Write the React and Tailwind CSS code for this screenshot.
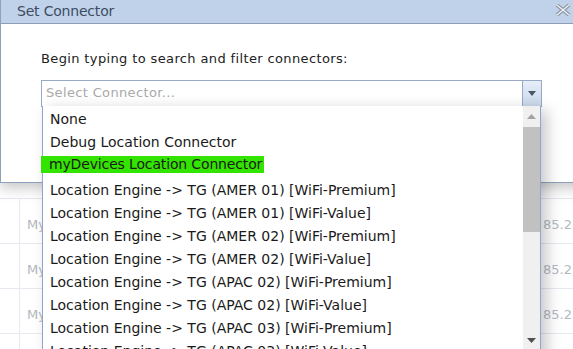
import React from "react";

const items = [
  "None",
  "Debug Location Connector",
  "myDevices Location Connector",
  "Location Engine -> TG (AMER 01) [WiFi-Premium]",
  "Location Engine -> TG (AMER 01) [WiFi-Value]",
  "Location Engine -> TG (AMER 02) [WiFi-Premium]",
  "Location Engine -> TG (AMER 02) [WiFi-Value]",
  "Location Engine -> TG (APAC 02) [WiFi-Premium]",
  "Location Engine -> TG (APAC 02) [WiFi-Value]",
  "Location Engine -> TG (APAC 03) [WiFi-Premium]",
  "Location Engine -> TG (APAC 03) [WiFi-Value]",
];

const font = { fontFamily: '"DejaVu Sans", Verdana, sans-serif' };

export default function App() {
  return (
    <div className="relative w-[573px] h-[349px] overflow-hidden bg-white" style={font}>
      {/* background grid */}
      <div className="flex flex-col pt-[198px]">
        {[0, 1, 2, 3].map((i) => (
          <div key={i} className="flex h-[45px] border-t border-[#e6eaf0]">
            <div className="w-[20px] border-r border-[#e6eaf0]" />
            <div className="flex-1 pl-[7px] pt-[16px] text-[13px] text-[#b4b8c0]">{i < 3 ? "My" : ""}</div>
            <div className="w-[30px] pt-[16px] text-[13px] text-[#b4b8c0]">{i < 3 ? "85.2" : ""}</div>
          </div>
        ))}
      </div>

      {/* dialog */}
      <div className="absolute left-0 top-0 w-[620px] h-[183px] flex flex-col bg-white border-l border-b border-[#8ea1bd] shadow-[0_4px_14px_rgba(0,0,0,0.25)]">
        <div className="h-[24px] flex items-center justify-between bg-[#bfd2ea] border-b border-[#8d9db5] pl-[16px] pr-[49px]">
          <span className="text-[14px] text-[#3e4c63] tracking-[-0.2px]">Set Connector</span>
          <svg width="16" height="12" viewBox="0 0 16 12" className="mb-[4px]">
            <path d="M2 1 L14 11 M14 1 L2 11" stroke="#8c96a4" strokeWidth="3.6" />
            <path d="M2 1 L14 11 M14 1 L2 11" stroke="#eef2f7" strokeWidth="1.4" />
          </svg>
        </div>
        <div className="pl-[40px] pt-[25px] text-[13px] text-[#222] tracking-[0.37px]">Begin typing to search and filter connectors:</div>
        <div className="ml-[40px] mt-[11px] w-[501px] h-[27px] flex border border-[#97a9c7] bg-white">
          <div className="flex-1 pl-[4px] flex items-center text-[13px] text-[#a9a9a9] tracking-[0.35px]">Select Connector...</div>
          <div className="w-[19px] border-l border-[#97a9c7] bg-gradient-to-b from-[#e6eef8] to-[#c9d8ec] flex items-center justify-center">
            <svg width="8" height="5" viewBox="0 0 8 5"><path d="M0 0 H8 L4 5 Z" fill="#4a5566" /></svg>
          </div>
        </div>
      </div>

      {/* dropdown list */}
      <div className="absolute left-[42px] top-[106px] w-[499px] h-[260px] flex bg-white border-l border-r border-[#8ea6c9] shadow-[6px_4px_14px_rgba(0,0,0,0.22)]">
        <div className="flex-1 flex flex-col pt-[2px] text-[14px] text-[#1a1a1a]">
          {items.map((t, i) => (
            <div key={i} className={i === 2 ? "h-[25px] flex items-start pt-[2px]" : "h-[23px] flex items-center"}>
              {i === 2 ? (
                <span className="bg-[#33e400] h-[17px] flex items-center pl-[8px] pr-[2px] -ml-[2px] tracking-[-0.15px]">{t}</span>
              ) : (
                <span className="pl-[7px]">{t}</span>
              )}
            </div>
          ))}
        </div>
        <div className="w-[17px] h-[243px] bg-[#f0f0f0] flex flex-col items-center">
          <div className="h-[21px] flex items-center justify-center">
            <svg width="9" height="5" viewBox="0 0 9 5"><path d="M0 5 H9 L4.5 0 Z" fill="#a3a3a3" /></svg>
          </div>
          <div className="w-[17px] h-[105px] bg-[#c1c1c1]" />
          <div className="flex-1" />
          <div className="h-[17px] flex items-center justify-center">
            <svg width="9" height="5" viewBox="0 0 9 5"><path d="M0 0 H9 L4.5 5 Z" fill="#505050" /></svg>
          </div>
        </div>
      </div>
    </div>
  );
}
